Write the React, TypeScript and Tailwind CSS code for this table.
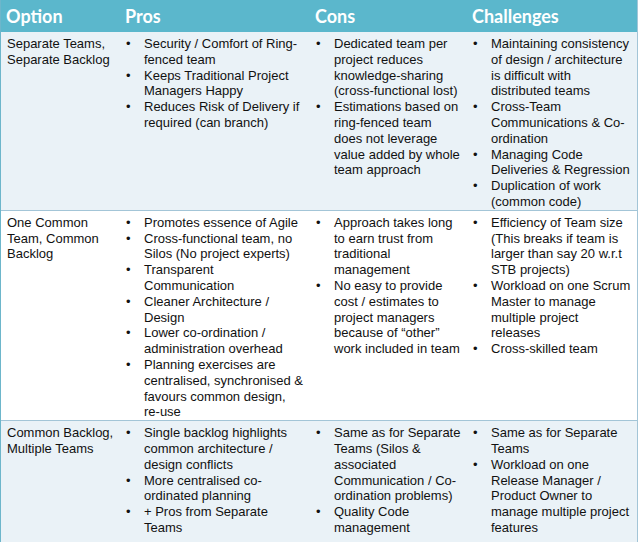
const columns = ["Option", "Pros", "Cons", "Challenges"];

type Row = {
  option: string;
  pros: string[];
  cons: string[];
  challenges: string[];
};

const rows: Row[] = [
  {
    option: "Separate Teams,\nSeparate Backlog",
    pros: [
      "Security / Comfort of Ring-\nfenced team",
      "Keeps Traditional Project\nManagers Happy",
      "Reduces Risk of Delivery if\nrequired (can branch)",
    ],
    cons: [
      "Dedicated team per\nproject reduces\nknowledge-sharing\n(cross-functional lost)",
      "Estimations based on\nring-fenced team\ndoes not leverage\nvalue added by whole\nteam approach",
    ],
    challenges: [
      "Maintaining consistency\nof design / architecture\nis difficult with\ndistributed teams",
      "Cross-Team\nCommunications & Co-\nordination",
      "Managing Code\nDeliveries & Regression",
      "Duplication of work\n(common code)",
    ],
  },
  {
    option: "One Common\nTeam, Common\nBacklog",
    pros: [
      "Promotes essence of Agile",
      "Cross-functional team, no\nSilos (No project experts)",
      "Transparent\nCommunication",
      "Cleaner Architecture /\nDesign",
      "Lower co-ordination /\nadministration overhead",
      "Planning exercises are\ncentralised, synchronised &\nfavours common design,\nre-use",
    ],
    cons: [
      "Approach takes long\nto earn trust from\ntraditional\nmanagement",
      "No easy to provide\ncost / estimates to\nproject managers\nbecause of \u201cother\u201d\nwork included in team",
    ],
    challenges: [
      "Efficiency of Team size\n(This breaks if team is\nlarger than say 20 w.r.t\nSTB projects)",
      "Workload on one Scrum\nMaster to manage\nmultiple project\nreleases",
      "Cross-skilled team",
    ],
  },
  {
    option: "Common Backlog,\nMultiple Teams",
    pros: [
      "Single backlog highlights\ncommon architecture /\ndesign conflicts",
      "More centralised co-\nordinated planning",
      "+ Pros from Separate\nTeams",
    ],
    cons: [
      "Same as for Separate\nTeams (Silos &\nassociated\nCommunication / Co-\nordination problems)",
      "Quality Code\nmanagement",
    ],
    challenges: [
      "Same as for Separate\nTeams",
      "Workload on one\nRelease Manager /\nProduct Owner to\nmanage multiple project\nfeatures",
    ],
  },
];

const gridCols = "grid grid-cols-[119px_190px_157px_170px]";

function BulletList({ items }: { items: string[] }) {
  return (
    <ul className="pl-[6px]">
      {items.map((item) => (
        <li key={item} className="flex">
          <span className="w-[18px] shrink-0">•</span>
          <span className="whitespace-pre-line">{item}</span>
        </li>
      ))}
    </ul>
  );
}

export default function App() {
  return (
    <div className="h-[542px] w-[640px] overflow-hidden bg-white">
      <div className="flex h-full w-[638px] flex-col border-l border-r border-l-[#6db6cb] border-r-[#a3c5d7]">
        <div
          className={`${gridCols} h-[32px] shrink-0 bg-[#5bb7cc] font-['Lato',sans-serif] text-[18px] leading-[18px] font-bold text-white`}
        >
          {columns.map((column) => (
            <div key={column} className="flex items-center pl-[5px]">
              {column}
            </div>
          ))}
        </div>

        {rows.map((row, index) => (
          <div
            key={row.option}
            className={[
              gridCols,
              "pt-[4px] font-['Liberation_Sans',Arial,sans-serif] text-[13px] leading-[15.8px] text-[#111]",
              index > 0 ? "border-t border-[#a3c5d7]" : "",
              index === 1 ? "bg-white" : "bg-[#eaf2f7]",
              index === rows.length - 1 ? "flex-1" : "",
            ].join(" ")}
          >
            <div className="whitespace-pre-line pl-[6px]">{row.option}</div>
            <BulletList items={row.pros} />
            <BulletList items={row.cons} />
            <BulletList items={row.challenges} />
          </div>
        ))}
      </div>
    </div>
  );
}
